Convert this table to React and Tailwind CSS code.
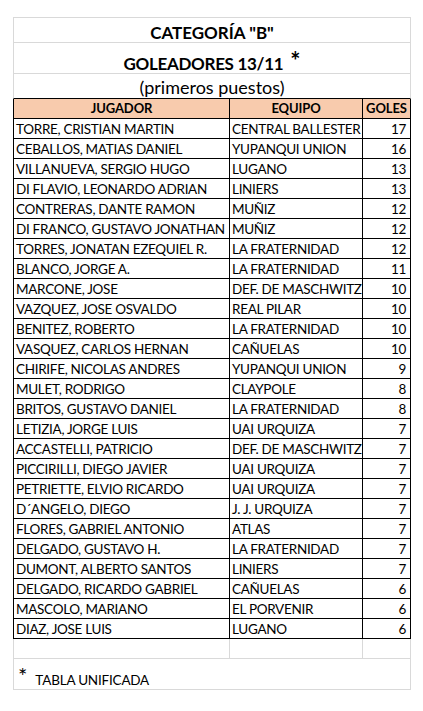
import React from "react";

const rows = [
  ["TORRE, CRISTIAN MARTIN", "CENTRAL BALLESTER", 17],
  ["CEBALLOS, MATIAS DANIEL", "YUPANQUI UNION", 16],
  ["VILLANUEVA, SERGIO HUGO", "LUGANO", 13],
  ["DI FLAVIO, LEONARDO ADRIAN", "LINIERS", 13],
  ["CONTRERAS, DANTE RAMON", "MUÑIZ", 12],
  ["DI FRANCO, GUSTAVO JONATHAN", "MUÑIZ", 12],
  ["TORRES, JONATAN EZEQUIEL R.", "LA FRATERNIDAD", 12],
  ["BLANCO, JORGE A.", "LA FRATERNIDAD", 11],
  ["MARCONE, JOSE", "DEF. DE MASCHWITZ", 10],
  ["VAZQUEZ, JOSE OSVALDO", "REAL PILAR", 10],
  ["BENITEZ, ROBERTO", "LA FRATERNIDAD", 10],
  ["VASQUEZ, CARLOS HERNAN", "CAÑUELAS", 10],
  ["CHIRIFE, NICOLAS ANDRES", "YUPANQUI UNION", 9],
  ["MULET, RODRIGO", "CLAYPOLE", 8],
  ["BRITOS, GUSTAVO DANIEL", "LA FRATERNIDAD", 8],
  ["LETIZIA, JORGE LUIS", "UAI URQUIZA", 7],
  ["ACCASTELLI, PATRICIO", "DEF. DE MASCHWITZ", 7],
  ["PICCIRILLI, DIEGO JAVIER", "UAI URQUIZA", 7],
  ["PETRIETTE, ELVIO RICARDO", "UAI URQUIZA", 7],
  ["D´ANGELO, DIEGO", "J. J. URQUIZA", 7],
  ["FLORES, GABRIEL ANTONIO", "ATLAS", 7],
  ["DELGADO, GUSTAVO H.", "LA FRATERNIDAD", 7],
  ["DUMONT, ALBERTO SANTOS", "LINIERS", 7],
  ["DELGADO, RICARDO GABRIEL", "CAÑUELAS", 6],
  ["MASCOLO, MARIANO", "EL PORVENIR", 6],
  ["DIAZ, JOSE LUIS", "LUGANO", 6],
];

export default function App() {
  return (
    <div
      className="w-[423px] h-[711px] bg-white text-black pt-[17px] pl-[13px]"
      style={{ fontFamily: "Lato, 'Open Sans', sans-serif" }}
    >
      <div className="w-[398px] flex flex-col">
        <div className="h-[26px] border border-[#d9d9d9] flex items-end justify-center pb-[1px]">
          <span className="text-[17px] font-bold leading-none">CATEGORÍA "B"</span>
        </div>
        <div className="h-[31px] border-x border-b border-[#d9d9d9] flex items-end justify-center pb-[1px]">
          <span className="text-[17px] font-bold leading-none tracking-[-0.3px]">GOLEADORES 13/11</span>
          <span className="text-[24px] font-bold leading-none ml-[7px] relative top-[1px]">*</span>
        </div>
        <div className="h-[25px] border-x border-[#d9d9d9] border-b border-b-black flex items-end justify-center">
          <span className="text-[18px] leading-none pb-[2px]">(primeros puestos)</span>
        </div>
        <div className="h-[20px] flex border-x border-b border-black bg-[#f8cbad] text-[13px] font-bold tracking-[-0.1px]">
          <div className="w-[216px] border-r border-black flex items-end justify-center pb-[3px] leading-none">JUGADOR</div>
          <div className="w-[133px] border-r border-black flex items-end justify-center pb-[3px] leading-none">EQUIPO</div>
          <div className="flex-1 flex items-end justify-center pb-[3px] leading-none">GOLES</div>
        </div>
        {rows.map(([n, t, g]) => (
          <div key={n} className="h-[20px] flex border-x border-b border-black text-[13.5px] tracking-[-0.3px]">
            <div className="w-[216px] border-r border-black flex items-end pl-[2px] pb-[2px] leading-none whitespace-nowrap overflow-hidden">{n}</div>
            <div className="w-[133px] border-r border-black flex items-end pl-[2px] pb-[2px] leading-none whitespace-nowrap overflow-hidden">{t}</div>
            <div className="flex-1 flex items-end justify-end pr-[4px] pb-[2px] leading-none">{g}</div>
          </div>
        ))}
        <div className="h-[20px] flex border-x border-b border-[#d9d9d9]">
          <div className="w-[216px] border-r border-[#d9d9d9]" />
          <div className="w-[133px] border-r border-[#d9d9d9]" />
          <div className="flex-1" />
        </div>
        <div className="h-[31px] border-x border-b border-[#d9d9d9] flex items-end pl-[4px] pb-[2px]">
          <span className="text-[22px] leading-none relative top-[0px]">*</span>
          <span className="text-[13.5px] leading-none ml-[8px] tracking-[-0.2px]">TABLA UNIFICADA</span>
        </div>
      </div>
    </div>
  );
}
